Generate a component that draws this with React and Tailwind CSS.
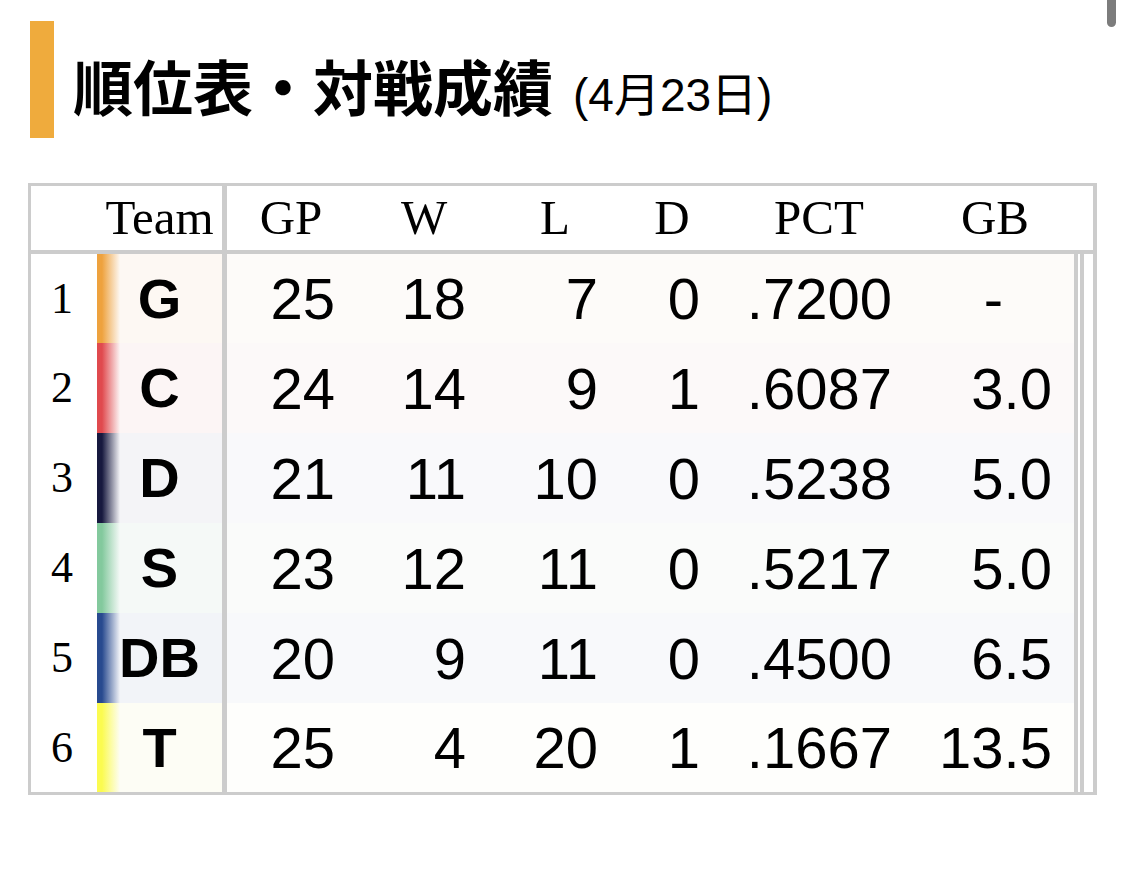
const teams = [
  {
    rank: 1, name: 'G', gp: 25, w: 18, l: 7, d: 0, pct: '.7200', gb: '-',
    h: 'h-[89px]',
    bar: 'bg-[linear-gradient(to_right,#eea23e_0px,#eea23e_5px,#fdf8f3_23px)]',
    row: 'bg-[#fdfbf9]',
  },
  {
    rank: 2, name: 'C', gp: 24, w: 14, l: 9, d: 1, pct: '.6087', gb: '3.0',
    h: 'h-[90px]',
    bar: 'bg-[linear-gradient(to_right,#e04a4e_0px,#e04a4e_5px,#fcf5f5_23px)]',
    row: 'bg-[#fcf9f9]',
  },
  {
    rank: 3, name: 'D', gp: 21, w: 11, l: 10, d: 0, pct: '.5238', gb: '5.0',
    h: 'h-[90px]',
    bar: 'bg-[linear-gradient(to_right,#17193f_0px,#17193f_5px,#f4f4f7_23px)]',
    row: 'bg-[#f9f9fb]',
  },
  {
    rank: 4, name: 'S', gp: 23, w: 12, l: 11, d: 0, pct: '.5217', gb: '5.0',
    h: 'h-[90px]',
    bar: 'bg-[linear-gradient(to_right,#83c99d_0px,#83c99d_5px,#f5f9f7_23px)]',
    row: 'bg-[#fafbfa]',
  },
  {
    rank: 5, name: 'DB', gp: 20, w: 9, l: 11, d: 0, pct: '.4500', gb: '6.5',
    h: 'h-[90px]',
    bar: 'bg-[linear-gradient(to_right,#284a8f_0px,#284a8f_5px,#f2f4f8_23px)]',
    row: 'bg-[#f8f9fb]',
  },
  {
    rank: 6, name: 'T', gp: 25, w: 4, l: 20, d: 1, pct: '.1667', gb: '13.5',
    h: 'h-[89px]',
    bar: 'bg-[linear-gradient(to_right,#fbfb50_0px,#fbfb50_5px,#fdfdf5_23px)]',
    row: 'bg-[#fefefc]',
  },
]

// 数値カラム: 幅と右余白
const cols = [
  { key: 'gp', label: 'GP', w: 'w-[128px]', pr: 'pr-[20px]' },
  { key: 'w', label: 'W', w: 'w-[138px]', pr: 'pr-[27px]' },
  { key: 'l', label: 'L', w: 'w-[124px]', pr: 'pr-[19px]' },
  { key: 'd', label: 'D', w: 'w-[110px]', pr: 'pr-[27px]' },
  { key: 'pct', label: 'PCT', w: 'w-[184px]', pr: 'pr-[19px]' },
  { key: 'gb', label: 'GB', w: 'w-[163px]', pr: 'pr-[22px]' },
]

const serif = 'font-["Liberation_Serif",serif]'
const sans = 'font-["Liberation_Sans",Arial,sans-serif]'

export default function App() {
  return (
    <div className="relative w-[1125px] h-[892px] bg-white overflow-hidden pt-[21px]">
      {/* スクロールバー */}
      <div className="absolute top-0 right-[9px] w-[9px] h-[27px] rounded-b-full bg-[#7c7c7c]"></div>

      {/* タイトル */}
      <div className="flex items-start h-[117px] pl-[30px]">
        <div className="w-[24px] h-[117px] bg-[#efab3d]"></div>
        <div className="ml-[19px] mt-[34px] flex items-baseline leading-none">
          <span className='font-["Noto_Sans_CJK_JP",sans-serif] font-bold text-[60px] text-black'>順位表・対戦成績</span>
          <span className='ml-[20px] font-["Liberation_Sans","Noto_Sans_CJK_JP",sans-serif] text-[46px] text-black'>(4月23日)</span>
        </div>
      </div>

      {/* 順位表 */}
      <div className="ml-[28px] mt-[45px] w-[1069px] border-[3px] border-r-4 border-[#cccccc]">
        <div className={`flex h-[68px] border-b-4 border-[#cccccc] ${serif} text-[49px] text-black`}>
          <div className="w-[66px]"></div>
          <div className="w-[125px] flex items-center justify-center">Team</div>
          <div className="w-[5px] bg-[#cccccc]"></div>
          {cols.map(c => (
            <div key={c.key} className={`${c.key === 'gb' ? 'w-[182px] pr-[14px]' : c.w} flex items-center justify-center`}>
              {c.label}
            </div>
          ))}
        </div>

        {teams.map(t => (
          <div key={t.rank} className={`flex ${t.h}`}>
            <div className={`w-[66px] flex items-center justify-center pr-[4px] ${serif} text-[44px] text-black`}>{t.rank}</div>
            <div className={`w-[125px] flex items-center justify-center ${t.bar} ${sans} font-bold text-[56px] text-black`}>{t.name}</div>
            <div className="w-[5px] bg-[#cccccc]"></div>
            {cols.map(c => (
              <div key={c.key} className={`${c.w} ${t.row} flex items-center ${c.key === 'gb' && t.gb === '-' ? 'justify-end pr-[71px]' : `justify-end ${c.pr}`} ${sans} text-[58px] text-black`}>
                {t[c.key]}
              </div>
            ))}
            <div className="w-[4px] bg-[#cccccc]"></div>
            <div className="w-[2px] bg-white"></div>
            <div className="w-[4px] bg-[#cccccc]"></div>
            <div className="w-[9px] bg-white"></div>
          </div>
        ))}
      </div>
    </div>
  )
}
